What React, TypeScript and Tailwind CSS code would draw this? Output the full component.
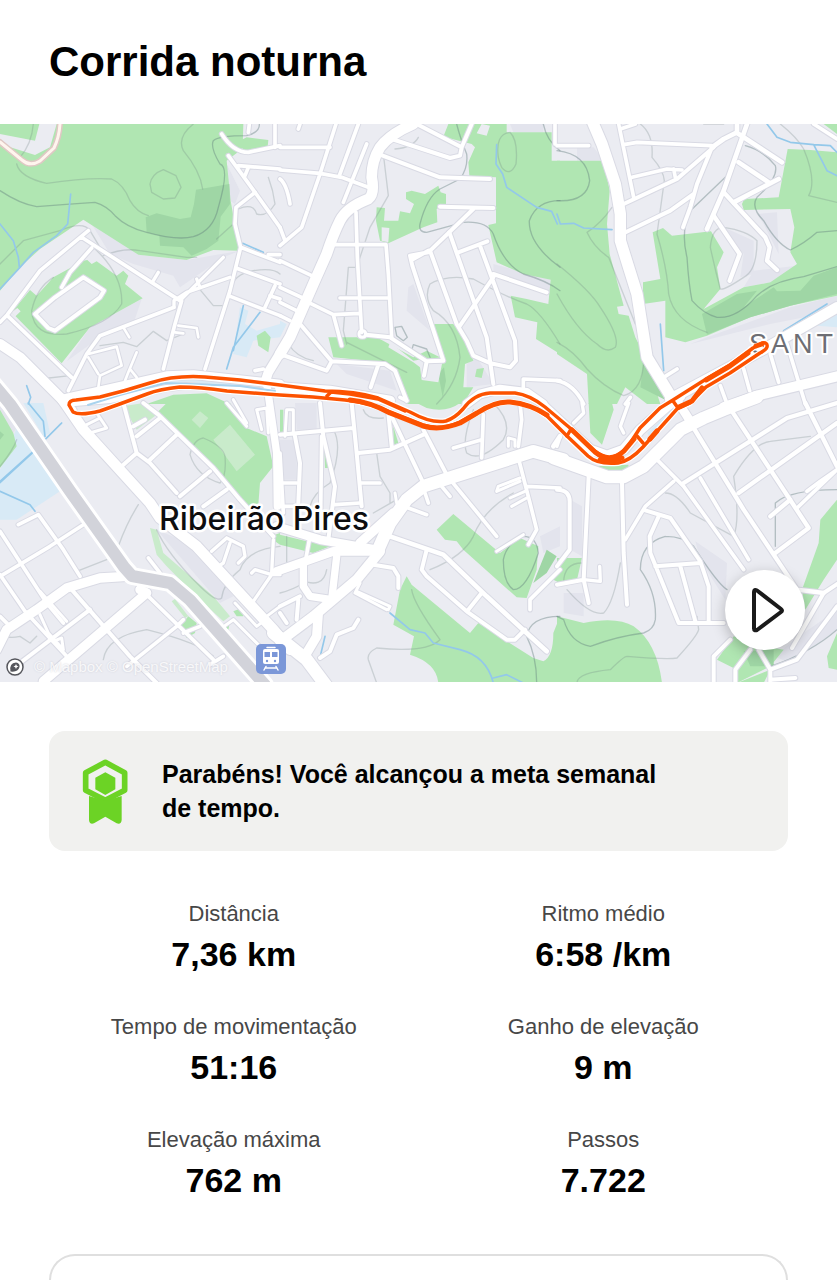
type Road = [width: number, d: string];

type Tile = {
  x: number;
  y: number;
  shade: string;
  water: string;
  park: string;
  parkLight: string;
  parkDark: string;
  land: string;
  contour: string;
  contourDark: string;
  stream: string;
  roads: Road[];
};

// Map data, one entry per tile. Coordinates are in tile units (3 units = 1 map pixel).
const tiles: Tile[] = [
  {
    x: 0,
    y: 0,
    shade:
      "M275 300L415 392 560 408 720 380 670 400 540 490 520 455 400 420 330 390ZM680 120L720 200 705 240 690 230ZM270 610L425 525 400 600 300 640 200 712Z",
    water: "M720 550L745 560 735 600 770 620 840 600V640L760 650 740 700 700 690ZM230 838L400 788 500 762 560 758 840 790V806L560 774 400 806 260 846Z",
    park:
      "M0 0H730L728 70 722 78 680 110 692 230 718 380 640 378 560 408 415 392 250 287 120 375 60 430 0 500ZM700 60L740 40 805 48 803 68 740 80ZM35 565L90 498 110 515 160 460 250 410 262 408 275 420 290 412 350 455 370 440 385 455 375 480 428 523 270 610 185 718ZM770 635L795 620 812 640 805 685 775 665ZM440 840L520 812 620 808 690 840Z",
    parkLight: "",
    parkDark:
      "M588 197L688 180 690 240 662 278 655 350 620 375 575 395 550 370 480 365 478 335 440 325 437 280 470 268 540 285 572 280 582 240Z",
    land: "M118 0L105 50 0 30V60L105 93 150 70 170 0ZM35 565L52 552 62 562 45 578ZM105 570L165 520 190 490 250 460 312 500 300 520 165 620 145 612Z",
    contour:
      "M50 120Q60 160 140 178Q260 160 335 165Q370 180 390 230Q410 265 445 275M580 0Q530 40 550 80Q600 140 608 195M450 180Q455 150 490 137L528 155 543 190 525 222 490 225 455 205ZM0 420L70 350 180 320Q250 290 270 320L300 370M310 395Q370 370 420 380L560 400 590 400M650 345L700 300M275 365Q370 450 365 540Q330 600 200 630Q100 640 95 560Q110 490 160 460M715 255Q760 235 770 270Q800 280 825 240Q820 200 805 160M690 500Q700 450 760 440Q820 430 840 450M590 485L640 545 670 545M300 665L370 655 410 668 460 622 500 650 550 630M120 765L210 755M100 0Q95 60 60 100",
    contourDark:
      "M0 200Q60 240 110 248Q200 240 285 235Q320 245 345 275Q380 310 440 325Q530 350 580 338Q640 320 655 250Q690 130 660 120Q630 70 640 50Q655 35 740 35Q780 25 778 0",
    stream:
      "M212 210L203 300 170 335 100 385 60 430 0 495M0 300L40 350 55 400 58 430M730 545L700 680M780 565L700 670 680 735M80 785L92 820 85 840M728 358L790 385",
    roads: [
      [11, "M665 30Q700 85 745 85L840 65M685 95L765 205 840 310M715 125L840 135M735 155L745 130"],
      [11, "M765 205L708 250 705 300 722 370 690 500 615 735M722 370L840 415M708 432L840 480M685 515L840 575"],
      [11, "M825 485L795 550M810 515L840 525M265 320L120 440 22 572 0 595M245 340L540 530M275 372L210 445 185 490"],
      [10, "M540 530L670 400M522 550V530L560 505 690 460M460 470L475 445M590 465L600 490"],
      [11, "M522 550L300 635 260 690 205 800M545 530L525 600 490 735M22 575L215 760"],
      [8, "M370 610L388 640M535 605L590 612 595 640M525 625L550 628M265 690L350 668 365 725 300 755 295 790M265 700L295 750M410 685L385 745 375 770M390 735L410 760"],
      [12, "M105 570L165 520 250 460 312 500 300 520 165 620 145 612Z"],
      [11, "M745 25L748 0M825 0V70M840 392H805M765 740L790 735"],
      [30, "M0 660L60 700 185 825 215 860"],
      [26, "M200 822L300 800 500 755 580 752 840 780"],
      [28, "M840 688L805 745 795 775"],
      [18, "M215 838L330 828 500 792 560 786 840 806"],
    ],
  },
  {
    x: 280,
    y: 0,
    shade: "M385 490L400 480 450 620 380 560ZM640 420L812 467 810 500 640 450ZM560 720L590 700 640 780 560 790ZM170 720L330 740 350 800 200 750ZM690 0H790V25H700Z",
    water: "M0 590L20 600 0 640ZM0 790L150 800 150 806 0 802Z",
    park:
      "M505 0H680L680 25 815 25 815 110 840 110V690L768 645 772 595 705 580 692 515 740 525 805 540 812 467 730 450 650 415 625 303 648 298 648 160 568 155 565 115 585 70 575 60 490 38ZM378 205L395 200 435 210 475 185 482 205 498 210 498 240 470 255 472 295 430 310 325 358 300 350 288 290 290 250 315 252 312 290 355 290 360 262 390 268 402 240 378 225ZM145 640L290 640 400 700 440 680 480 700 462 600 520 600 560 650 580 710 555 720 550 790 580 790 550 840H380L350 740 310 715 160 700ZM590 735L612 732 605 762 585 758Z",
    parkLight: "",
    parkDark: "M475 750L492 730 498 770 488 820Z",
    land: "M305 310L328 312 325 355 305 350ZM330 655L400 710 430 705 490 700 475 775 425 768 420 730 400 715 325 670ZM605 0L630 5 620 35 590 28Z",
    contour:
      "M655 100Q645 30 690 25Q715 50 708 120Q690 160 665 130Q658 115 655 100ZM345 75Q400 70 415 40M310 90L325 215 270 310 230 430 205 430 190 620 200 660M580 465Q500 450 450 480Q430 520 460 560Q530 600 540 700Q530 780 470 840M580 465Q680 520 740 540Q780 560 840 660M200 655L380 745M25 660Q50 700 100 710",
    contourDark:
      "M840 230Q770 230 748 290Q745 360 840 430M530 0Q540 40 560 90Q565 130 540 165L480 195Q440 220 420 300Q415 325 440 325L550 295Q620 290 640 330Q670 420 730 450Q800 470 840 500M345 610L365 607 382 640 370 650 350 635ZM395 680L400 662 440 675 450 700M790 0Q800 50 840 80",
    stream: "M650 62L648 120 668 150 680 190 770 250 815 262 832 300",
    roads: [
      [11, "M0 70H150M168 0L120 150 65 310 0 365M235 0L178 155M260 60L190 235M0 138L120 148 185 160 265 190M0 165Q20 180 30 240"],
      [12, "M410 0L545 70 540 95 510 102 335 45M575 0L545 70M300 92L480 160 630 165"],
      [11, "M228 265L232 400 245 625M165 362H318L325 450 335 640M180 522H325M0 410L95 455M0 490L75 525M85 535L160 572 238 568M160 572L185 665M0 535L50 560M0 575L30 590"],
      [12, "M60 600L155 712 315 720 345 740 380 830M0 690L140 740 155 712M295 722L272 790"],
      [12, "M258 632L330 640 440 712 490 710 397 425 390 395 445 385 580 255M440 712L432 755M400 405L445 380M480 248L640 252"],
      [12, "M508 325L570 500 620 640 640 780M450 380L530 600 560 650 580 695 632 718 690 730 708 710 705 650 600 365M535 385L622 352M640 460L540 605M640 450L800 505"],
      [11, "M730 790V765L840 770M0 310L15 350M60 0L55 15M825 0V60M360 820L380 830"],
      [9, "M237 630Q237 620 247 620Q257 620 257 630Q257 640 247 640Q237 640 237 630"],
      [32, "M400 0Q330 30 300 70Q275 110 275 160Q285 210 265 225Q200 250 180 290Q160 330 140 390L100 480 30 640 0 690"],
      [30, "M0 790L150 800 330 830"],
      [26, "M560 840L600 810 660 795 740 805 790 840"],
    ],
  },
  {
    x: 557,
    y: 0,
    shade: "M600 270L660 265 665 390 620 300ZM450 640L700 550 840 515V560L640 600 400 660ZM500 310L590 350 590 450 550 460 560 390ZM60 70H110L140 110H60ZM560 490L590 440 720 425 640 475Z",
    water: "M780 605L840 570V610Z",
    park:
      "M0 110H140L158 200 150 300 158 390 200 545 180 548 185 570 215 575 235 640 265 700 310 840H180 95L90 750 0 690ZM287 325L318 312 345 335 462 322 500 385 480 430 490 495 440 555 560 490 640 475 720 420 700 385 712 310 700 255 560 258 555 240 562 225 665 220 692 75 760 78 840 85V515L700 545 580 580 450 635 385 655 325 640 325 530 258 540 258 475 310 465ZM800 0H840V30Z",
    parkLight: "",
    parkDark: "M435 570L540 510 600 500 560 550 650 490 660 502 730 500 770 455 840 430V510L700 545 580 580 450 632ZM262 700L330 830 250 790Z",
    land: "M180 840L205 790 270 840Z",
    contour:
      "M0 420Q100 500 130 550Q190 640 175 670Q150 690 120 660Q60 620 0 510M165 250Q130 300 90 325Q110 370 155 400M0 655Q50 680 90 735Q140 790 200 815Q260 800 260 700M155 400L235 600M250 0Q290 30 285 100Q320 140 322 170L300 330Q330 430 335 510Q350 590 450 625M600 350Q600 440 560 460Q500 500 490 495Q475 440 460 370Q465 310 500 310Q570 320 600 350M670 0Q720 40 740 75Q780 170 755 215L840 235M440 0H500",
    contourDark:
      "M0 80Q90 90 98 170Q90 235 0 230M515 150L400 260Q370 320 390 400Q395 480 405 530Q440 570 480 580Q540 585 600 515Q650 470 740 458L840 428M565 65Q620 80 655 125Q665 160 600 220Q580 250 620 290Q660 360 700 378Q740 360 780 325L840 320",
    stream: "M630 0L660 40 700 55 770 62 810 140 840 155M770 62L820 65 840 85M0 270L10 300 50 298 80 312 165 317M310 600L320 740M680 620L810 540",
    roads: [
      [11, "M185 0L230 220M190 15L235 0M200 62L240 55 465 65M0 65H95M225 160L330 135 375 138M350 135L355 160"],
      [12, "M200 240L360 165 470 70M465 70L420 180 400 250 378 310M195 330L340 260 410 210"],
      [14, "M540 0V25L500 45 465 70M545 30L675 115M570 0L500 200 450 315M545 115L635 175M665 165L530 235"],
      [13, "M500 205L625 340 638 370 630 410 660 438M470 275L548 390 518 470"],
      [11, "M320 760L360 735M490 785L510 840M560 735L578 800M640 690L665 775M690 660L745 840M770 0L840 45M220 820L205 840M0 770Q50 780 80 840"],
      [34, "M105 -10L135 60 175 180 190 270 190 350 240 510 270 700 340 815"],
      [32, "M840 550L640 665 340 825"],
      [30, "M850 755L600 815 500 850"],
    ],
  },
  {
    x: 0,
    y: 279,
    shade: "M0 0H20L60 60 40 90 0 40ZM470 380L590 430 700 580 660 600Z",
    water: "M40 100L60 50 180 265 50 350 0 350V200ZM70 0H130L150 90 130 100Z",
    park:
      "M500 0H690L740 75 800 100 820 190 780 240 775 305 735 310 640 195 470 30ZM0 20L40 90 50 130 0 195ZM540 670L565 640 590 660 585 690 560 705ZM670 665L690 655 685 680ZM700 625L725 615 730 640 710 640ZM825 395L840 390V425L825 415Z",
    parkLight:
      "M370 10L430 0 470 35 410 80ZM640 110L690 65 765 155 710 205ZM575 50L600 25 625 45 600 75ZM450 375L470 380 490 450 640 580 690 640 670 655 600 590 500 490 470 455ZM515 595L525 588 565 640 555 645Z",
    parkDark: "M0 85L12 95 0 110Z",
    land: "",
    contour:
      "M415 305Q380 360 355 430M470 380Q500 450 600 550Q650 600 665 585Q670 540 720 500Q740 440 840 430M570 155Q580 110 610 105Q670 130 675 160Q680 220 660 240Q590 220 570 155M230 505L320 470M310 770Q320 700 440 680Q600 720 640 760M0 690Q20 710 60 700L90 720 110 700M0 190Q40 140 50 110",
    contourDark: "",
    stream: "M85 0L130 55 135 100M0 265L90 305 105 325M185 60L140 105M183 62L138 107M100 145L0 235M98 149L0 239",
    roads: [
      [11, "M0 385L140 600 190 660M0 520L150 430 250 365M55 365L115 335 190 440 240 520M0 640L30 670M0 515L75 625 200 760"],
      [9, "M120 635L145 690 190 740M120 565L200 655M160 715L185 705 190 740M250 70L300 45 320 75 270 90M300 45L290 30"],
      [12, "M215 560L390 760 470 840M270 620L60 780M370 0L410 150 450 180 530 270M410 150L365 190M410 100L480 45M400 70L435 50M450 170L530 95"],
      [12, "M430 0L475 35 640 195 720 290M540 280L630 205M610 310L680 260M720 290L820 400"],
      [10, "M680 405L635 445M680 405L730 430 735 460 715 480M690 420L670 480 640 500M820 410L815 510M755 510L765 500 815 515H840M815 515L760 595"],
      [11, "M445 465L480 510M445 580L640 770M380 790L530 670 550 650M550 690L600 670M630 785L670 760"],
      [9, "M665 675L700 650 790 740M705 600L770 670 790 655M680 0L740 70M700 -10L740 60M770 20L800 15 805 90M770 20L785 80M800 640L840 610"],
      [22, "M800 -60L830 150 832 310"],
      [32, "M187 -12L250 80 450 300 480 345 590 430 820 680 870 740"],
      [28, "M-10 740L20 680 110 620 200 555 300 525 380 520"],
      [28, "M420 560L440 570 300 690 130 835"],
    ],
  },
  {
    x: 280,
    y: 279,
    shade: "M780 400L840 370V430L790 450ZM0 110H50V230H0ZM45 0H110V80H50Z",
    water: "",
    park:
      "M470 380L520 333 660 450 720 405 775 430 770 500 740 585 710 583 550 440 530 415 495 410ZM340 665L360 560 380 520 395 545 570 690 595 660 760 765 790 775Q820 760 820 690L840 640V840H475Q470 780 390 755L402 700ZM0 395L80 415 150 430 100 450 0 425ZM340 70L355 120 340 125ZM133 135L150 195 135 195ZM410 0H540Q500 30 440 15ZM0 20L10 20V90H0ZM820 530L840 500V540Z",
    parkLight: "",
    parkDark: "M760 540L800 440 830 460 800 510Z",
    land: "",
    contour:
      "M450 500Q550 460 580 400Q610 320 700 270M395 560Q400 600 480 710Q440 750 290 735Q260 750 265 770L290 840M640 0Q700 60 670 110Q600 180 560 150Q545 110 580 20M290 150L300 220 330 270 330 300M160 80Q190 130 150 240Q100 270 90 310M250 20Q260 50 310 45M280 330L350 290M60 530Q130 560 140 500M0 570Q40 560 70 540M20 400V480",
    contourDark: "M670 470Q680 420 730 400Q770 400 775 450Q740 560 700 560Q670 540 670 470M740 700Q750 640 840 640M740 700Q770 760 770 840",
    stream: "M330 630L390 680 435 690 460 720 540 740Q620 760 640 840M640 825L680 815 730 840M135 700L122 755",
    roads: [
      [12, "M120 0L130 100 165 250 145 410M45 100L60 180 55 300M0 95L220 75M215 0L230 150 245 310M235 150L330 140 430 95M325 30L335 130M335 40L430 240M430 80L500 215"],
      [11, "M610 35L605 165M520 135L605 110M720 0L725 50 715 130M240 240H300M0 240H50M165 305L240 300M430 255L445 300M385 315L440 335M485 250L510 280"],
      [9, "M685 130V105L705 110V130M15 100L20 20H40V90M720 235L650 265 655 250 720 225M735 265L690 285M740 285L695 310M650 445L730 395M345 270L350 300M230 565L330 610 325 620M240 540L225 570 320 620"],
      [11, "M515 235L650 400M715 165L750 300 770 380 745 425M740 250L840 255M750 620V590L840 500M125 100L122 330M90 400L75 480M0 150L10 330M0 310H50"],
      [14, "M330 400L490 455 620 580 740 690 800 745"],
      [12, "M440 440L425 500 440 520 560 625 680 710 705 710 735 680M565 620L605 570M280 485L340 495 355 520V555"],
      [12, "M120 765L150 745 170 695 220 675 235 650M0 610L60 580M55 590L50 650M0 630L20 660"],
      [26, "M-10 505L160 445 300 445"],
      [30, "M300 445L230 530 100 640 20 700 0 715"],
      [38, "M290 450L330 360 380 290 430 250 760 145 850 170"],
      [26, "M-10 370L120 410 290 440"],
      [28, "M240 420L340 330"],
      [38, "M-20 690L80 770 140 850"],
      [22, "M170 460L155 590 90 580 70 550 70 480"],
      [28, "M115 630L110 700 80 750"],
      [14, "M820 130L840 100"],
    ],
  },
  {
    x: 557,
    y: 279,
    shade: "M415 415L510 480 505 590 430 470ZM20 570H80V640L20 630ZM40 290L75 310V460L40 440ZM650 760L740 690 840 620V680L700 780Z",
    water: "M270 90L340 25 350 35 280 105Z",
    park:
      "M95 0H165L170 20 135 125 100 90ZM115 190L215 185 210 205 160 215ZM0 640L80 660Q180 640 230 670Q300 720 315 840H0ZM0 465H75L60 530 0 540ZM840 290L790 350 785 420 735 560 745 620 800 530 840 470ZM480 770L530 700 620 730 680 740 640 790 540 840 540 800ZM840 690L810 760 815 795 840 800ZM540 840L640 800 620 840Z",
    parkLight: "",
    parkDark: "M560 745L650 740 650 790 580 790Z",
    land: "",
    contour:
      "M60 840Q60 810 160 800Q200 760 210 760Q330 770 360 765Q420 700 425 680L420 640M325 270Q360 270 400 330L530 400Q550 350 530 220Q590 120 640 115L760 100M30 560Q100 640 140 630Q170 600 190 480M20 540Q20 480 75 480",
    contourDark:
      "M325 400Q380 400 410 430Q480 540 510 560M325 400Q250 420 250 500Q300 570 295 650Q290 680 260 690Q180 700 100 730Q40 720 20 650L0 640M655 430V300Q700 260 840 260M640 790Q760 750 840 680",
    stream: "",
    roads: [
      [13, "M410 75L560 320 720 560 800 570M525 25L640 200 755 375 655 450M640 340L700 290M380 240L690 45 840 0M545 270L840 60M745 0L840 190"],
      [11, "M840 200L720 315M750 265L790 235 840 200M300 170L380 250 560 500M430 225L575 470M350 235L265 310 205 410"],
      [12, "M265 322L340 345 430 475 455 550V655M305 340L278 400 280 450 365 660H500M295 490L430 480M370 490L415 655"],
      [12, "M95 220L80 530 0 545M80 530L95 600M195 240L200 450 210 605M0 260Q40 260 38 300V440L0 490"],
      [10, "M80 530L130 535 128 490M215 0L190 70 200 90M75 0L80 30 50 60M0 130L10 100"],
      [12, "M800 570L705 735M860 530L800 570M840 610L720 770 640 800 605 740M470 840V760L520 710M535 840V800L580 740M640 800V840M640 830L715 825"],
      [38, "M-10 165L150 222 200 222 260 190 370 80 440 45 500 20 600 -18"],
      [30, "M-40 10L100 140 150 158 200 140 250 80 330 10 370 -20"],
      [26, "M365 0L400 55"],
    ],
  },
];

const route = [
  "M69 281Q69 276 76 276L100 273Q125 267 150 259Q175 251 205 253L240 256 280 261 325 267Q355 267 378 274L410 288Q432 300 446 297Q455 294 463 285Q474 270 490 269L515 269Q530 271 545 283L570 304 593 326Q606 336 613 333Q622 330 629 321L640 304 660 284 673 276 703 257 730 241 753 224 762 219Q768 218 767 223Q766 226 760 229L730 249 706 263 690 279 677 285 660 304 643 323Q630 337 618 339Q598 341 588 332L567 312 547 292Q530 279 510 278Q495 277 477 289L460 298Q440 307 423 301L390 288Q368 278 345 276L313 273 280 271 227 267Q200 263 180 263Q160 265 147 270L117 281 100 287Q80 292 73 288Z",
  "M327 272L331 268 350 270 378 275 405 287M567 312L571 305M637 312L643 319M673 277L678 284",
];

// stretches walked twice
const routeHeavy =
  "M350 276Q370 278 390 289L423 302Q440 307 460 299L477 289Q495 277 510 278Q530 280 547 291M572 306L595 328Q610 340 624 327L634 315M600 336Q610 339 622 334M679 283L692 277 702 264M706 256L730 242 748 229M756 222L762 220M650 315L657 307";

const stats = [
  { label: "Distância", value: "7,36 km" },
  { label: "Ritmo médio", value: "6:58 /km" },
  { label: "Tempo de movimentação", value: "51:16" },
  { label: "Ganho de elevação", value: "9 m" },
  { label: "Elevação máxima", value: "762 m" },
  { label: "Passos", value: "7.722" },
];

function EachTile({ render }: { render: (tile: Tile) => React.ReactNode }) {
  return (
    <>
      {tiles.map((tile) => (
        <g key={`${tile.x}-${tile.y}`} transform={`translate(${tile.x} ${tile.y}) scale(0.33333)`}>
          {render(tile)}
        </g>
      ))}
    </>
  );
}

function RouteMap() {
  return (
    <svg
      viewBox="0 0 837 558"
      className="block h-auto w-full bg-[#ebecf2]"
      fill="none"
      strokeLinecap="round"
      strokeLinejoin="round"
      role="img"
      aria-label="Mapa do percurso"
    >
      <EachTile
        render={(t) => (
          <>
            <path d={t.shade} fill="#e3e4ed" />
            <path d={t.water} fill="#d8eaf6" />
            <path d={t.park} fill="#b0e6b2" />
            <path d={t.parkLight} fill="#c9ebcb" />
            <path d={t.parkDark} fill="#9fd6a5" />
            <path d={t.land} fill="#ebecf2" />
          </>
        )}
      />
      <EachTile
        render={(t) => (
          <>
            <path d={t.contour} stroke="#6b7f80" strokeOpacity="0.26" strokeWidth="4" />
            <path d={t.contourDark} stroke="#5f7a7a" strokeOpacity="0.4" strokeWidth="4" />
            <path d={t.stream} stroke="#93c8ea" strokeWidth="5" />
          </>
        )}
      />

      {/* road casings sit under every road fill */}
      <EachTile render={(t) => t.roads.map(([w, d]) => <path key={d} d={d} stroke="#d9dae4" strokeWidth={w + 6} />)} />
      <EachTile render={(t) => t.roads.map(([w, d]) => <path key={d} d={d} stroke="#fff" strokeWidth={w} />)} />
      <path d="M0 18L22 36Q30 43 40 37L54 24Q59 14 60 0" stroke="#dfc8c4" strokeWidth="6" />
      <path d="M0 18L22 36Q30 43 40 37L54 24Q59 14 60 0" stroke="#fff5ee" strokeWidth="3" />

      {/* railway */}
      <path d="M-10 256L10 280 70 367 124 443 132 452 170 459 190 476 265 561" stroke="#fff" strokeWidth="18" />
      <path d="M-10 256L10 280 70 367 124 443 132 452 170 459 190 476 265 561" stroke="#d2d3da" strokeWidth="12" />

      <path d="M88 281L120 271 165 259 240 262 275 267" stroke="#a9d3ee" strokeWidth="2" />

      <text
        x="159"
        y="406"
        fontSize="32"
        fill="#0d0d0f"
        stroke="#fff"
        strokeWidth="5"
        paintOrder="stroke"
        className="font-['Inter','Liberation_Sans',sans-serif] font-medium"
      >
        Ribeirão Pires
      </text>
      <text
        x="749"
        y="229"
        fontSize="27"
        fill="#6d6e74"
        stroke="#fff"
        strokeWidth="4"
        paintOrder="stroke"
        className="font-['Liberation_Sans',Arial,sans-serif] tracking-[4px]"
      >
        SANT
      </text>

      {route.map((d) => (
        <path key={d} d={d} stroke="#fff" strokeWidth="6" />
      ))}
      {route.map((d) => (
        <path key={d} d={d} stroke="#fc5200" strokeWidth="3.5" />
      ))}
      <path d={routeHeavy} stroke="#fc5200" strokeWidth="5" />

      {/* train station */}
      <rect x="256" y="520" width="30" height="30" rx="5" fill="#7b97d8" />
      <rect x="263" y="525" width="16" height="15" rx="2" fill="#fff" />
      <path d="M267 523.500H275" stroke="#fff" strokeWidth="1.500" />
      <path d="M264.500 528H270V533H264.500ZM272 528H277.500V533H272Z" fill="#7b97d8" />
      <circle cx="267" cy="537" r="1.200" fill="#7b97d8" />
      <circle cx="275" cy="537" r="1.200" fill="#7b97d8" />
      <path d="M266 542.500L264 546M276 542.500L278 546M265 544H277" stroke="#fff" strokeWidth="1.500" />
    </svg>
  );
}

function MedalIcon() {
  return (
    <svg viewBox="246 112 141 201" className="w-[47px] shrink-0" fill="#6cd325" aria-hidden="true">
      <path
        d="M316 125L374 156V209L316 239L257 209V156Z"
        fill="none"
        stroke="#6cd325"
        strokeWidth="17"
        strokeLinejoin="round"
      />
      <path d="M316 155L346 171V206L316 223L286 206V171Z" />
      <path d="M267 226L316 240L365 226V298Q364 312 350 308L316 288L282 308Q268 312 267 298Z" />
    </svg>
  );
}

export default function App() {
  return (
    <main className="flex min-h-screen flex-col bg-white font-['Liberation_Sans',Arial,sans-serif] text-black">
      <h1 className="px-[49px] py-9 text-[42px] font-bold leading-[52px]">Corrida noturna</h1>

      <section className="relative overflow-hidden">
        <RouteMap />

        <div className="absolute bottom-1 left-1 flex items-center gap-2">
          <svg viewBox="0 0 22 22" className="size-[22px]" aria-hidden="true">
            <circle cx="11" cy="11" r="8" fill="#fff" stroke="#55565c" strokeWidth="1.500" />
            <path d="M6.500 15.500Q5 7 12 6.500Q16 7 15.500 11Q14 16.500 6.500 15.500Z" fill="#55565c" />
            <path d="M12 8L12.800 9.700 14.500 10.500 12.800 11.300 12 13 11.200 11.300 9.500 10.500 11.200 9.700Z" fill="#fff" />
          </svg>
          <p className="text-[15px] leading-5 text-white/80 [text-shadow:0_0_2px_#c9cad4]">
            <a href="#mapbox">© Mapbox</a> <a href="#openstreetmap">© OpenStreetMap</a>
          </p>
        </div>

        <button
          type="button"
          aria-label="Reproduzir percurso"
          className="absolute bottom-8 right-8 size-20 rounded-full bg-white shadow-[0_4px_14px_rgba(0,0,0,0.25)]"
        >
          <svg viewBox="0 0 80 80" fill="none" stroke="#1a1a1a" strokeWidth="4" strokeLinejoin="round">
            <path d="M32 20.500Q29 19 29 22V58.500Q29 61 32 60L56 42Q58 40.500 56 39Z" />
          </svg>
        </button>
      </section>

      <div className="flex flex-1 flex-col px-[49px]">
        <div className="mt-[49px] flex items-center gap-[33px] rounded-2xl bg-[#f1f1ef] py-[26px] pl-[33px] pr-28">
          <MedalIcon />
          <p className="text-[25px] font-bold leading-[34px]">Parabéns! Você alcançou a meta semanal de tempo.</p>
        </div>

        <dl className="mt-[49px] grid grid-cols-2 gap-y-[39px] text-center">
          {stats.map((stat) => (
            <div key={stat.label} className="flex flex-col gap-[6px]">
              <dt className="text-[22px] leading-7 text-[#474747]">{stat.label}</dt>
              <dd className="text-[34px] font-bold leading-10">{stat.value}</dd>
            </div>
          ))}
        </dl>

        <section className="mt-[54px] flex-1 rounded-t-[32px] border-2 border-b-0 border-[#dfdfdf]" />
      </div>
    </main>
  );
}
